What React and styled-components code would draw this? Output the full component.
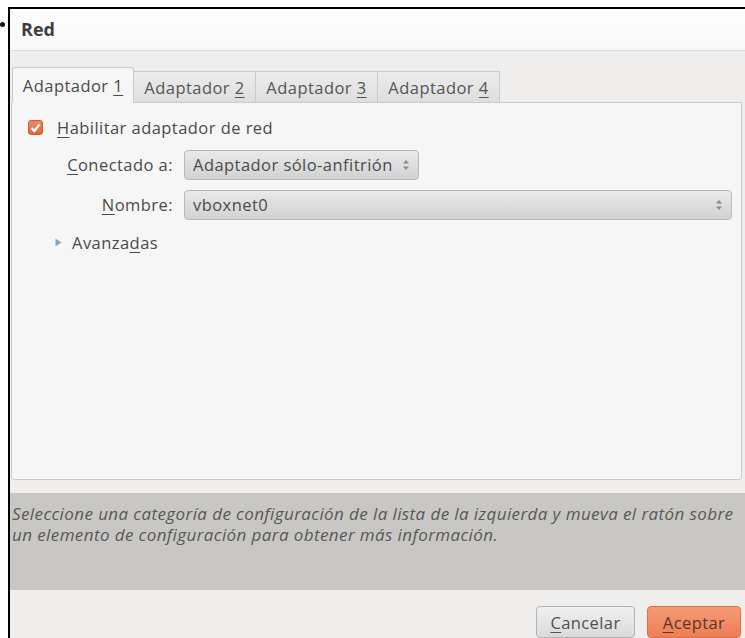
import React from 'react'
import styled, { createGlobalStyle } from 'styled-components'

const GlobalStyle = createGlobalStyle`
  html, body {
    margin: 0;
    padding: 0;
    background: #ffffff;
  }
  body {
    font-family: "Open Sans", "Noto Sans", sans-serif;
    overflow: hidden;
  }
`

const Page = styled.div`
  display: flex;
  width: 745px;
  height: 638px;
  overflow: hidden;
`

const Bullet = styled.span`
  width: 5px;
  height: 5px;
  margin: 22px 3px 0 0;
  border-radius: 50%;
  background: #111;
  flex: none;
`

const Frame = styled.div`
  flex: 1;
  margin-top: 7px;
  border-top: 2px solid #000;
  border-left: 2px solid #000;
  display: flex;
  flex-direction: column;
  background: #efeeed;
  min-width: 0;
`

const Header = styled.div`
  height: 42px;
  display: flex;
  align-items: center;
  padding: 0 11px;
  background: linear-gradient(#fdfdfd, #f8f8f8);
  border-bottom: 1px solid #dadada;
  font-size: 18px;
  font-weight: 700;
  color: #3f3f3f;
`

const Body = styled.div`
  padding: 15px 3px 0 1px;
`

const TabStrip = styled.div`
  display: flex;
  align-items: flex-end;
  padding-left: 1px;
  height: 36px;
`

const Tab = styled.div`
  width: 122px;
  height: ${p => (p.active ? 36 : 31)}px;
  box-sizing: border-box;
  display: flex;
  align-items: center;
  justify-content: center;
  font-size: 16.5px;
  letter-spacing: 0.45px;
  color: ${p => (p.active ? '#4a4a4a' : '#555')};
  border: 1px solid #c9c9c9;
  border-bottom: none;
  border-left: ${p => (p.first ? '1px solid #c9c9c9' : 'none')};
  border-radius: ${p => (p.active ? '3px 3px 0 0' : '0')};
  background: ${p => (p.active ? '#f6f6f6' : 'linear-gradient(#ececec, #dedede)')};
  padding-top: ${p => (p.active ? 0 : 1)}px;
  position: relative;
  z-index: ${p => (p.active ? 1 : 0)};
  margin-bottom: ${p => (p.active ? -1 : 0)}px;
`

const Key = styled.u`
  text-decoration-thickness: 1px;
  text-underline-offset: 3px;
`

const Panel = styled.div`
  height: 378px;
  box-sizing: border-box;
  border: 1px solid #cbcbcb;
  border-radius: 0 0 3px 3px;
  background: #f6f6f6;
  padding: 16px 9px 0 16px;
  color: #4a4a4a;
  font-size: 16.5px;
  letter-spacing: 0.45px;
`

const CheckRow = styled.label`
  display: flex;
  align-items: center;
  gap: 14px;
  height: 18px;
`

const CheckBox = styled.span`
  width: 15px;
  height: 15px;
  border-radius: 3px;
  background: linear-gradient(#ec8a62, #dd6a40);
  border: 1px solid #c95d35;
  box-sizing: border-box;
  display: flex;
  align-items: center;
  justify-content: center;
`

const Form = styled.div`
  display: grid;
  grid-template-columns: 109px 1fr;
  column-gap: 11px;
  row-gap: 10px;
  margin: 13px 0 0 36px;
  align-items: center;
`

const Label = styled.span`
  text-align: right;
  white-space: nowrap;
`

const Combo = styled.div`
  height: 30px;
  box-sizing: border-box;
  width: ${p => (p.wide ? 'auto' : '235px')};
  display: flex;
  align-items: center;
  justify-content: space-between;
  padding: 0 8px 0 8px;
  border: 1px solid #b9b9b9;
  border-radius: 4px;
  background: linear-gradient(#e9e9e9, #d2d2d2);
  color: #4c4c4c;
  white-space: nowrap;
`

const Spinner = styled.svg`
  flex: none;
`

const Expander = styled.div`
  display: flex;
  align-items: center;
  gap: 10px;
  margin: 11px 0 0 27px;
`

const Info = styled.div`
  margin-top: 13px;
  height: 100px;
  box-sizing: border-box;
  padding: 10px 4px 0 2px;
  background: #c9c7c4;
  color: #585858;
  font-size: 17px;
  font-style: italic;
  line-height: 21px;
  letter-spacing: 0.4px;
`

const Buttons = styled.div`
  display: flex;
  justify-content: flex-end;
  gap: 12px;
  padding: 16px 4px 0 0;
`

const Button = styled.div`
  width: ${p => (p.primary ? 94 : 99)}px;
  height: 32px;
  box-sizing: border-box;
  border-radius: 4px;
  display: flex;
  align-items: center;
  justify-content: center;
  font-size: 16.5px;
  letter-spacing: 0.4px;
  border: 1px solid ${p => (p.primary ? '#dc7048' : '#b2b2b2')};
  background: ${p =>
    p.primary ? 'linear-gradient(#f59a74, #ee7f55)' : 'linear-gradient(#f1f1f1, #d9d9d9)'};
  color: ${p => (p.primary ? '#5b3426' : '#505050')};
`

const Arrows = () => (
  <Spinner width="8" height="14" viewBox="0 0 8 14">
    <path d="M1 5.5 L4 2 L7 5.5 Z" fill="#8a8a8a" />
    <path d="M1 8.5 L4 12 L7 8.5 Z" fill="#8a8a8a" />
  </Spinner>
)

const tabs = ['1', '2', '3', '4']

const App = () => (
  <Page>
    <GlobalStyle />
    <Bullet />
    <Frame>
      <Header>Red</Header>
      <Body>
        <TabStrip>
          {tabs.map((n, i) => (
            <Tab key={n} active={i === 0} first={i === 0}>
              Adaptador&nbsp;<Key>{n}</Key>
            </Tab>
          ))}
        </TabStrip>
        <Panel>
          <CheckRow>
            <CheckBox>
              <svg width="11" height="10" viewBox="0 0 11 10">
                <path d="M1.5 5 L4.3 8 L9.5 1.5" stroke="#fff" strokeWidth="2.2" fill="none" />
              </svg>
            </CheckBox>
            <span>
              <Key>H</Key>abilitar adaptador de red
            </span>
          </CheckRow>
          <Form>
            <Label>
              <Key>C</Key>onectado a:
            </Label>
            <Combo>
              Adaptador sólo-anfitrión
              <Arrows />
            </Combo>
            <Label>
              <Key>N</Key>ombre:
            </Label>
            <Combo wide>
              vboxnet0
              <Arrows />
            </Combo>
          </Form>
          <Expander>
            <svg width="7" height="9" viewBox="0 0 7 9">
              <path d="M0.5 0.5 L6.5 4.5 L0.5 8.5 Z" fill="#86a3cc" />
            </svg>
            <span>
              Avanza<Key>d</Key>as
            </span>
          </Expander>
        </Panel>
      </Body>
      <Info>
        Seleccione una categoría de configuración de la lista de la izquierda y mueva el ratón sobre
        un elemento de configuración para obtener más información.
      </Info>
      <Buttons>
        <Button>
          <span>
            <Key>C</Key>ancelar
          </span>
        </Button>
        <Button primary>
          <span>
            <Key>A</Key>ceptar
          </span>
        </Button>
      </Buttons>
    </Frame>
  </Page>
)

export default App
